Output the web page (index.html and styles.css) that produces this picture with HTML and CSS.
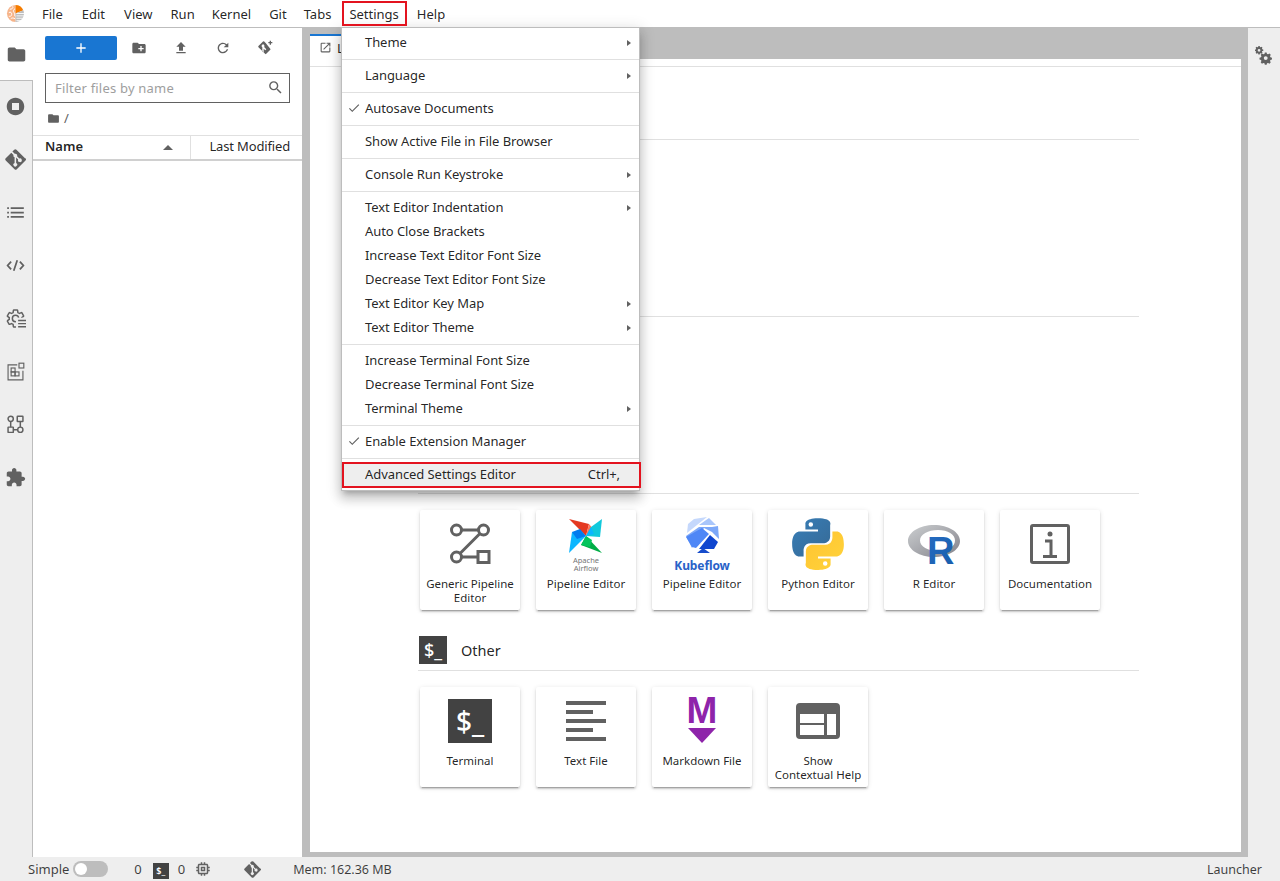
FILE: index.html
```html
<!DOCTYPE html>
<html lang="en">
<head>
<meta charset="utf-8">
<title>JupyterLab</title>
<link rel="stylesheet" href="styles.css">
</head>
<body>
<div class="app">
  <header class="topbar">
    <svg class="logo" viewBox="0 0 20 20">
      <path d="M10 1A9 9 0 0 0 10 19z" fill="#f6b48a"/>
      <path d="M10 1A9 9 0 0 1 18.200 6.500L10 10z" fill="#f57c00"/>
      <path d="M10 10 18.200 6.500A9 9 0 0 1 10 19z" fill="#bdbdbd"/>
      <path d="M7 2.500c1 2-1 3-3 3M3 9c2-1 3 0 3 2s-2 2-3 2M9.500 5c-2 1-2 3-1 4s0 3 1 4M5 15.500c1-1 3-1 4.500 0" fill="none" stroke="#fff" stroke-width="1"/>
      <path d="M11 10h8M11 12.500h8M11 15h7M11 17.500h5" fill="none" stroke="#fff" stroke-width=".9"/>
    </svg>
    <nav class="menubar">
      <span class="menubar-item m-file">File</span>
      <span class="menubar-item m-edit">Edit</span>
      <span class="menubar-item m-view">View</span>
      <span class="menubar-item m-run">Run</span>
      <span class="menubar-item m-kernel">Kernel</span>
      <span class="menubar-item m-git">Git</span>
      <span class="menubar-item m-tabs">Tabs</span>
      <span class="menubar-item m-settings">Settings</span>
      <span class="menubar-item m-help">Help</span>
    </nav>
  </header>

  <div class="middle">
    <aside class="sidebar">
      <div class="side-tab active"><svg viewBox="0 0 24 24"><path d="M10 4H4c-1.1 0-1.99.9-1.99 2L2 18c0 1.1.9 2 2 2h16c1.1 0 2-.9 2-2V8c0-1.1-.9-2-2-2h-8l-2-2z"/></svg></div>
      <div class="side-rest">
        <div class="side-tab"><svg viewBox="0 0 24 24"><path d="M12 2C6.48 2 2 6.48 2 12s4.48 10 10 10 10-4.48 10-10S17.52 2 12 2zm4 14H8V8h8v8z"/></svg></div>
        <div class="side-tab"><svg viewBox="0 0 24 24"><path d="M23.15 10.9 13.1.85a1.8 1.8 0 0 0-2.55 0L8.47 2.93l2.64 2.64a2.14 2.14 0 0 1 2.71 2.73l2.54 2.54a2.14 2.14 0 1 1-1.28 1.21l-2.37-2.37v6.24a2.14 2.14 0 1 1-1.76-.06v-6.3a2.14 2.14 0 0 1-1.16-2.81L7.18 4.22.85 10.55a1.8 1.8 0 0 0 0 2.55l10.05 10.05a1.8 1.8 0 0 0 2.55 0l10-10a1.8 1.8 0 0 0 0-2.55z"/></svg></div>
        <div class="side-tab"><svg viewBox="0 0 24 24"><path d="M2.500 13h2v-2h-2v2zm0 5h2v-2h-2v2zm0-10h2V6h-2v2zm4 5h15v-2h-15v2zm0 5h15v-2h-15v2zm0-12v2h15V6h-15z"/></svg></div>
        <div class="side-tab"><svg viewBox="0 0 24 24"><path class="stroke" d="M7 7.500 3 12l4 4.500M17 7.500 21 12l-4 4.500M14 6l-4 12"/></svg></div>
        <div class="side-tab"><svg viewBox="0 0 24 24">
          <path class="stroke thin" d="M19.140 12.940c.04-.3.06-.61.06-.94 0-.32-.02-.64-.07-.94l2.030-1.580a.49.49 0 0 0 .12-.61l-1.920-3.320a.488.488 0 0 0-.59-.22l-2.390.96c-.5-.38-1.030-.7-1.620-.94l-.36-2.540a.484.484 0 0 0-.48-.41h-3.840c-.24 0-.43.17-.47.41l-.36 2.540c-.59.24-1.130.57-1.620.94l-2.390-.96c-.22-.08-.47 0-.59.22L2.740 8.870c-.12.21-.08.47.12.61l2.030 1.580c-.05.3-.09.63-.09.94s.02.64.07.94l-2.030 1.580a.49.49 0 0 0-.12.61l1.920 3.320c.12.22.37.29.59.22l2.390-.96c.5.38 1.030.7 1.620.94l.36 2.540c.05.24.24.41.48.41h3.840c.24 0 .44-.17.47-.41l.36-2.540c.59-.24 1.130-.56 1.620-.94l2.390.96c.22.08.47 0 .59-.22l1.920-3.320c.12-.22.07-.47-.12-.61l-2.010-1.580zM12 15.600c-1.980 0-3.600-1.620-3.600-3.600s1.620-3.600 3.600-3.600 3.600 1.620 3.600 3.600-1.620 3.600-3.600 3.600z"/>
          <rect class="bgfill" x="12.500" y="11" width="12" height="13"/>
          <path d="M15 13.500h9v1.700h-9zM15 17h9v1.700h-9zM15 20.500h9v1.700h-9z"/>
        </svg></div>
        <div class="side-tab"><svg viewBox="0 0 24 24"><g class="stroke fine"><path d="M14 4.500H3.500v17h17V11"/><rect x="16" y="2.500" width="5.500" height="5.500"/><rect x="7" y="8" width="4.500" height="4.500"/><rect x="7" y="12.500" width="4.500" height="4.500"/><rect x="11.500" y="12.500" width="4.500" height="4.500"/></g></svg></div>
        <div class="side-tab"><svg viewBox="0 0 24 24"><g class="stroke thin"><circle cx="6.500" cy="5.500" r="3"/><rect x="14" y="2.500" width="6.500" height="6" rx=".5"/><rect x="3.500" y="15" width="6" height="6" rx=".5"/><circle cx="17.500" cy="18" r="3"/><path d="M6.500 8.500V15M17.500 8.500V15M9.500 18h5"/></g></svg></div>
        <div class="side-tab"><svg viewBox="0 0 24 24"><path d="M20.500 11H19V7c0-1.100-.9-2-2-2h-4V3.500C13 2.120 11.880 1 10.500 1S8 2.120 8 3.500V5H4c-1.100 0-1.990.9-1.990 2v3.800H3.500c1.490 0 2.700 1.210 2.700 2.700s-1.210 2.700-2.700 2.700H2V20c0 1.100.9 2 2 2h3.800v-1.500c0-1.490 1.210-2.700 2.700-2.700 1.490 0 2.700 1.210 2.700 2.700V22H17c1.100 0 2-.9 2-2v-4h1.500c1.380 0 2.500-1.120 2.500-2.500S21.880 11 20.500 11z"/></svg></div>
      </div>
    </aside>

    <section class="filepanel">
      <div class="fp-toolbar">
        <button class="new-btn" type="button"><svg viewBox="0 0 24 24"><path d="M19 13h-6v6h-2v-6H5v-2h6V5h2v6h6v2z"/></svg></button>
        <div class="fp-tools">
          <svg viewBox="0 0 24 24"><path d="M20 6h-8l-2-2H4c-1.110 0-1.990.89-1.990 2L2 18c0 1.110.89 2 2 2h16c1.110 0 2-.89 2-2V8c0-1.110-.89-2-2-2zm-1 8h-3v3h-2v-3h-3v-2h3V9h2v3h3v2z"/></svg>
          <svg viewBox="0 0 24 24"><path d="M5 20h14v-2H5v2zm0-10h4v6h6v-6h4l-7-7-7 7z"/></svg>
          <svg viewBox="0 0 24 24"><path d="M17.650 6.350A7.960 7.960 0 0 0 12 4c-4.420 0-7.990 3.580-7.990 8s3.570 8 7.990 8c3.730 0 6.840-2.550 7.730-6h-2.080A5.990 5.990 0 0 1 12 18c-3.310 0-6-2.690-6-6s2.690-6 6-6c1.660 0 3.140.69 4.220 1.780L13 11h7V4l-2.350 2.350z"/></svg>
          <svg viewBox="0 0 24 24"><path d="M13 4.500 10.800 2.300a1.300 1.300 0 0 0-1.800 0L2.200 9.100a1.300 1.300 0 0 0 0 1.800l9.900 9.900a1.300 1.300 0 0 0 1.800 0l6-6a1.300 1.300 0 0 0 0-1.800zM9 6l2 2v3l3 3-1.500 1.500L10 13v5H8v-7L6.500 9z"/><path d="M19 1h2v2h2v2h-2v2h-2V5h-2V3h2z"/></svg>
        </div>
      </div>
      <div class="filter">
        <span class="filter-text">Filter files by name</span>
        <svg viewBox="0 0 24 24"><path d="M15.500 14h-.79l-.28-.27A6.470 6.470 0 0 0 16 9.500 6.500 6.500 0 1 0 9.500 16c1.610 0 3.090-.59 4.230-1.570l.27.28v.79l5 4.990L20.490 19l-4.990-5zm-6 0C7.010 14 5 11.990 5 9.500S7.010 5 9.500 5 14 7.010 14 9.500 11.990 14 9.500 14z"/></svg>
      </div>
      <div class="crumbs">
        <svg viewBox="0 0 24 24"><path d="M10 4H4c-1.100 0-1.990.9-1.990 2L2 18c0 1.100.9 2 2 2h16c1.100 0 2-.9 2-2V8c0-1.100-.9-2-2-2h-8l-2-2z"/></svg>
        <span>/</span>
      </div>
      <div class="listing-head">
        <div class="col-name"><span>Name</span><i class="caret-up"></i></div>
        <div class="col-mod">Last Modified</div>
      </div>
    </section>

    <main class="dock">
      <div class="tabbar">
        <div class="tab">
          <svg viewBox="0 0 24 24"><path d="M19 19H5V5h7V3H5a2 2 0 0 0-2 2v14a2 2 0 0 0 2 2h14a2 2 0 0 0 2-2v-7h-2v7zM14 3v2h3.590l-9.830 9.830 1.410 1.410L19 6.410V10h2V3h-7z"/></svg>
          <span>Launcher</span>
        </div>
      </div>
      <div class="launcher">
        <div class="toolbar-strip"></div>
        <div class="sections">
          <section class="lsec"><div class="lhead"></div><div class="cards empty"></div></section>
          <section class="lsec"><div class="lhead"></div><div class="cards empty"></div></section>
          <section class="lsec">
            <div class="lhead"></div>
            <div class="cards">
              <div class="card"><div class="card-icon">
                <svg class="i44" viewBox="0 0 40 40"><g class="pipe"><circle cx="6.500" cy="6" r="5"/><circle cx="33.500" cy="6" r="5"/><circle cx="6.500" cy="33" r="5"/><rect x="28" y="27.500" width="11" height="11"/><path d="M11.500 6h17M30 9.500 10 29.500M11.500 33H28"/></g></svg>
              </div><div class="card-label">Generic Pipeline Editor</div></div>
              <div class="card"><div class="card-icon">
                <svg class="i-air" viewBox="0 0 34 52">
                  <path d="M0 0 20 5 17 17z" fill="#e43921"/>
                  <path d="M20 5 25 11 17 17z" fill="#ff7557"/>
                  <path d="M33 0 31 18 17 17 22 8z" fill="#11c9dc"/>
                  <path d="M22 8 25 15 17 17z" fill="#0cb6ff"/>
                  <path d="M33 34 12 26 17 17z" fill="#00ad46"/>
                  <path d="M17 17 23 21 21 28 12 26z" fill="#04c45c"/>
                  <path d="M0 34 3 13 17 17z" fill="#0cb6ff"/>
                  <path d="M3 13 11 10 17 17 8 20z" fill="#017cee"/>
                  <text class="air-text" x="17" y="44">Apache</text><text class="air-text" x="17" y="51.500">Airflow</text>
                </svg>
              </div><div class="card-label">Pipeline Editor</div></div>
              <div class="card"><div class="card-icon kube">
                <svg class="i-kube" viewBox="0 0 34 36">
                  <path d="M9 2 22 0 12 8 2 16 3 7z" fill="#c5d8fc"/>
                  <path d="M14 8 24 1 31 8z" fill="#a9c6fb"/>
                  <path d="M1 19 14 10 27 10 33 9 34 22 27 15 19 11 7 31z" fill="#7da8f8"/>
                  <path d="M1 20 17 11 24 17 11 31 7 30z" fill="#4f87f6"/>
                  <path d="M25 18 33 25 29 32 14 32z" fill="#0f46cf"/>
                  <path d="M12 36 18 31 25 36z" fill="#174ccb"/>
                </svg>
                <span class="kube-text">Kubeflow</span>
              </div><div class="card-label">Pipeline Editor</div></div>
              <div class="card"><div class="card-icon">
                <svg class="i-py" viewBox="0 0 24 24">
                  <defs>
                    <linearGradient id="pyb" x1="0" y1="0" x2="1" y2="1"><stop offset="0" stop-color="#387eb8"/><stop offset="1" stop-color="#366994"/></linearGradient>
                    <linearGradient id="pyy" x1="0" y1="0" x2="1" y2="1"><stop offset="0" stop-color="#ffd43b"/><stop offset="1" stop-color="#ffc331"/></linearGradient>
                  </defs>
                  <path fill="url(#pyb)" d="M11.900.5c-5.800 0-5.500 2.500-5.500 2.500v2.600h5.600v.8H4.200S.5 6 .5 11.900s3.200 5.700 3.200 5.700h1.900v-2.700s-.1-3.200 3.200-3.200h5.500s3.100 0 3.100-3V3.600S18.900.5 11.900.5zM8.800 2.300a1 1 0 1 1 0 2 1 1 0 0 1 0-2z"/>
                  <path fill="url(#pyy)" transform="rotate(180 12 12)" d="M11.900.5c-5.800 0-5.500 2.500-5.500 2.500v2.600h5.600v.8H4.200S.5 6 .5 11.900s3.200 5.700 3.200 5.700h1.900v-2.700s-.1-3.200 3.200-3.200h5.500s3.100 0 3.100-3V3.600S18.900.5 11.900.5zM8.800 2.300a1 1 0 1 1 0 2 1 1 0 0 1 0-2z"/>
                </svg>
              </div><div class="card-label">Python Editor</div></div>
              <div class="card"><div class="card-icon">
                <svg class="i-r" viewBox="0 0 52 39">
                  <defs>
                    <linearGradient id="rg" x1="0" y1="0" x2="1" y2="1"><stop offset="0" stop-color="#cbced0"/><stop offset="1" stop-color="#84838b"/></linearGradient>
                    <linearGradient id="rb" x1="0" y1="0" x2="1" y2="1"><stop offset="0" stop-color="#276dc3"/><stop offset="1" stop-color="#165caa"/></linearGradient>
                  </defs>
                  <path fill="url(#rg)" fill-rule="evenodd" d="M26 0C11.600 0 0 7.200 0 16s11.600 16 26 16 26-7.200 26-16S40.400 0 26 0zm4 5c10 0 17 4.500 17 10.500S40 26 30 26 12 21.500 12 15.500 20 5 30 5z"/>
                  <text class="r-text" x="19" y="38.500" fill="url(#rb)">R</text>
                </svg>
              </div><div class="card-label">R Editor</div></div>
              <div class="card"><div class="card-icon">
                <svg class="i-doc" viewBox="0 0 40 40"><rect x="1.500" y="1.500" width="37" height="37" rx="1.500" class="docbox"/><circle cx="20" cy="10" r="2.500" fill="#616161"/><path d="M15 17h6v15M13 32.500h14" class="docline"/></svg>
              </div><div class="card-label">Documentation</div></div>
            </div>
          </section>
          <section class="lsec">
            <div class="lhead">
              <div class="term-small"><span>$_</span></div>
              <h2>Other</h2>
            </div>
            <div class="cards">
              <div class="card"><div class="card-icon"><div class="term-big"><span>$_</span></div></div><div class="card-label">Terminal</div></div>
              <div class="card"><div class="card-icon">
                <svg class="i-text" viewBox="0 0 40 40"><path d="M0 0h40v4H0zM0 9h27v4H0zM0 18h40v4H0zM0 27h27v4H0zM0 36h40v4H0z" fill="#616161"/></svg>
              </div><div class="card-label">Text File</div></div>
              <div class="card"><div class="card-icon md">
                <span class="md-m">M</span>
                <svg class="i-mdarrow" viewBox="0 0 28 15"><path d="M0 0h28L14 15z" fill="#8e24aa"/></svg>
              </div><div class="card-label">Markdown File</div></div>
              <div class="card"><div class="card-icon">
                <svg class="i-help" viewBox="0 0 44 36"><path fill="#616161" fill-rule="evenodd" d="M4 0h36a4 4 0 0 1 4 4v28a4 4 0 0 1-4 4H4a4 4 0 0 1-4-4V4a4 4 0 0 1 4-4zM4 11v9h24v-9zM4 22v10h24V22zM31 11v21h9V11z"/></svg>
              </div><div class="card-label">Show<br>Contextual Help</div></div>
            </div>
          </section>
        </div>
      </div>
    </main>

    <aside class="rightbar">
      <svg viewBox="0 0 24 24"><path d="M15.500 8.500l.5 2 1.500.6 1.800-1 1.700 1.700-1 1.800.6 1.500 2 .5v2.400l-2 .5-.6 1.500 1 1.800-1.700 1.700-1.800-1-1.500.6-.5 2h-2.400l-.5-2-1.500-.6-1.800 1-1.700-1.700 1-1.800-.6-1.500-2-.5v-2.400l2-.5.6-1.500-1-1.800 1.700-1.700 1.800 1 1.500-.6.500-2zM14.300 13.500a2.600 2.600 0 1 0 0 5.200 2.600 2.600 0 0 0 0-5.200z" fill-rule="evenodd"/><path d="M6.300 0l.3 1.300 1 .4 1.100-.7 1.300 1.300-.7 1.100.4 1 1.300.3v1.800l-1.300.3-.4 1 .7 1.100-1.300 1.300-1.100-.7-1 .4-.3 1.300H4.500l-.3-1.300-1-.4-1.100.7L.8 9l.7-1.100-.4-1L-.2 6.600V4.800l1.300-.3.4-1-.7-1.100L2.100 1.100l1.100.7 1-.4L4.500 0zM5.400 3.900a1.800 1.800 0 1 0 0 3.600 1.800 1.800 0 0 0 0-3.600z" fill-rule="evenodd"/></svg>
    </aside>
  </div>

  <footer class="statusbar">
    <div class="st-simple">Simple</div>
    <div class="toggle"><i></i></div>
    <span class="st-n1">0</span>
    <div class="term-tiny"><span>$_</span></div>
    <span class="st-n2">0</span>
    <svg class="st-chip" viewBox="0 0 24 24"><path d="M15 9H9v6h6V9zm-2 4h-2v-2h2v2zm8-2V9h-2V7c0-1.100-.9-2-2-2h-2V3h-2v2h-2V3H9v2H7c-1.100 0-2 .9-2 2v2H3v2h2v2H3v2h2v2c0 1.100.9 2 2 2h2v2h2v-2h2v2h2v-2h2c1.100 0 2-.9 2-2v-2h2v-2h-2v-2h2zm-4 6H7V7h10v10z"/></svg>
    <svg class="st-git" viewBox="0 0 24 24"><path d="M23.150 10.900 13.100.85a1.800 1.800 0 0 0-2.550 0L8.470 2.930l2.640 2.640a2.140 2.140 0 0 1 2.710 2.730l2.540 2.540a2.140 2.140 0 1 1-1.280 1.210l-2.370-2.370v6.240a2.140 2.140 0 1 1-1.760-.06v-6.300a2.140 2.140 0 0 1-1.160-2.810L7.180 4.220.85 10.550a1.800 1.800 0 0 0 0 2.550l10.050 10.050a1.800 1.800 0 0 0 2.550 0l10-10a1.800 1.800 0 0 0 0-2.550z"/></svg>
    <span class="st-mem">Mem: 162.36 MB</span>
    <span class="st-right">Launcher</span>
  </footer>

  <div class="menu">
    <div class="mgroup"><div class="mitem"><span>Theme</span><i class="sub"></i></div></div>
    <div class="mgroup"><div class="mitem"><span>Language</span><i class="sub"></i></div></div>
    <div class="mgroup"><div class="mitem"><svg class="check" viewBox="0 0 24 24"><path d="M9 16.170 4.830 12l-1.420 1.410L9 19 21 7l-1.410-1.410z"/></svg><span>Autosave Documents</span></div></div>
    <div class="mgroup"><div class="mitem"><span>Show Active File in File Browser</span></div></div>
    <div class="mgroup"><div class="mitem"><span>Console Run Keystroke</span><i class="sub"></i></div></div>
    <div class="mgroup">
      <div class="mitem"><span>Text Editor Indentation</span><i class="sub"></i></div>
      <div class="mitem"><span>Auto Close Brackets</span></div>
      <div class="mitem"><span>Increase Text Editor Font Size</span></div>
      <div class="mitem"><span>Decrease Text Editor Font Size</span></div>
      <div class="mitem"><span>Text Editor Key Map</span><i class="sub"></i></div>
      <div class="mitem"><span>Text Editor Theme</span><i class="sub"></i></div>
    </div>
    <div class="mgroup">
      <div class="mitem"><span>Increase Terminal Font Size</span></div>
      <div class="mitem"><span>Decrease Terminal Font Size</span></div>
      <div class="mitem"><span>Terminal Theme</span><i class="sub"></i></div>
    </div>
    <div class="mgroup"><div class="mitem"><svg class="check" viewBox="0 0 24 24"><path d="M9 16.170 4.830 12l-1.420 1.410L9 19 21 7l-1.410-1.410z"/></svg><span>Enable Extension Manager</span></div></div>
    <div class="mgroup"><div class="mitem hl"><span>Advanced Settings Editor</span><span class="shortcut">Ctrl+,</span></div></div>
  </div>
  <div class="red red-settings"></div>
  <div class="red red-advanced"></div>
</div>
</body>
</html>
```

FILE: styles.css
```css
* { box-sizing: border-box; }
html, body { margin: 0; height: 100%; overflow: hidden; }
body {
  font-family: "Noto Sans", "Open Sans", sans-serif;
  font-size: 13px;
  color: rgba(0, 0, 0, .87);
  background: #fff;
}
.app { position: relative; display: flex; flex-direction: column; width: 1280px; height: 881px; }

/* top bar */
.topbar { display: flex; align-items: center; height: 28px; border-bottom: 1px solid #bdbdbd; flex: none; }
.logo { width: 19px; height: 19px; margin: 0 0 1px 6px; flex: none; }
.menubar { display: flex; align-items: center; margin-left: 17px; }
.menubar-item { white-space: nowrap; }
.m-edit { margin-left: 19px; }
.m-view { margin-left: 19px; }
.m-run { margin-left: 18px; }
.m-kernel { margin-left: 17px; }
.m-git { margin-left: 18px; }
.m-tabs { margin-left: 17px; }
.m-settings { margin-left: 18px; }
.m-help { margin-left: 18px; }

/* middle */
.middle { display: flex; flex: 1; min-height: 0; }
.sidebar { width: 33px; flex: none; display: flex; flex-direction: column; background: #fff; }
.side-rest { flex: 1; background: #eee; border-right: 1px solid #bdbdbd; border-top: 1px solid #bdbdbd; }
.side-tab { height: 53px; display: flex; align-items: center; justify-content: center; }
.sidebar > .side-tab { height: 52px; }
.side-rest .side-tab { padding: 0 2px 2px 0; }
.side-tab svg { width: 21px; height: 21px; fill: #616161; }
.stroke { fill: none; stroke: #616161; stroke-width: 2; }
.thin { stroke-width: 1.700; fill: none; }
.fine { stroke-width: 1.300; }
.side-tab .bgfill { fill: #eee; }

.filepanel { width: 269px; flex: none; background: #fff; display: flex; flex-direction: column; }
.fp-toolbar { display: flex; align-items: center; height: 24px; margin: 8px 12px 0; }
.new-btn { width: 72px; height: 24px; padding: 0; border: 0; border-radius: 2px; background: #1976d2; display: flex; align-items: center; justify-content: center; }
.new-btn svg { width: 16px; height: 16px; fill: #fff; }
.fp-tools { display: flex; margin-left: 14px; gap: 26px; }
.fp-tools svg { width: 16px; height: 16px; fill: #616161; }
.filter { display: flex; align-items: center; justify-content: space-between; height: 30px; margin: 13px 12px 0; padding: 0 5px 0 9px; border: 1px solid #616161; }
.filter-text { color: #9e9e9e; letter-spacing: .2px; }
.filter svg { width: 17px; height: 17px; margin-top: -2px; fill: #616161; }
.crumbs { display: flex; align-items: center; height: 32px; padding: 0 0 2px 14px; gap: 4px; color: #616161; }
.crumbs svg { width: 13px; height: 13px; fill: #616161; }
.listing-head { display: flex; height: 26px; margin-top: 0; border-top: 1px solid #e0e0e0; border-bottom: 2px solid #d0d0d0; }
.col-name { width: 158px; flex: none; display: flex; align-items: center; justify-content: space-between; padding: 0 17px 3px 12px; border-right: 1px solid #e0e0e0; font-weight: 600; }
.caret-up { width: 0; height: 0; margin-top: 2px; border-left: 5px solid transparent; border-right: 5px solid transparent; border-bottom: 5px solid #616161; }
.col-mod { flex: 1; display: flex; align-items: center; justify-content: flex-end; padding: 0 12px 3px 0; letter-spacing: -.15px; }

.dock { flex: none; width: 946px; background: #bdbdbd; border-left: 8px solid #bdbdbd; border-right: 7px solid #bdbdbd; padding-bottom: 5px; display: flex; flex-direction: column; }
.tabbar { height: 31px; padding-top: 6px; flex: none; }
.tab { display: flex; align-items: center; gap: 5px; width: 140px; height: 25px; background: #fff; border-top: 2px solid #1976d2; padding-left: 9px; overflow: hidden; }
.tab svg { width: 13px; height: 13px; fill: #616161; }
.launcher { flex: 1; background: #fff; min-height: 0; overflow: hidden; }
.toolbar-strip { height: 8px; border-bottom: 1px solid #e0e0e0; }
.sections { padding: 38px 0 0 108px; width: 829px; }
.lsec { height: 177px; }
.lhead { display: flex; align-items: center; height: 35px; padding: 0 0 6px 1px; border-bottom: 1px solid #e0e0e0; }
.lhead h2 { margin: 0 0 0 14px; font-size: 14.500px; font-weight: 400; }
.term-small { width: 28px; height: 28px; background: #424242; color: #fff; display: flex; align-items: center; justify-content: center; font-size: 18px; font-weight: 500; }
.cards { display: flex; gap: 16px; padding: 16px 0 0 2px; }
.card { width: 100px; height: 100px; background: #fff; border-radius: 2px; box-shadow: 0 2px 2px 0 rgba(0,0,0,.14), 0 3px 1px -2px rgba(0,0,0,.2), 0 1px 5px 0 rgba(0,0,0,.12); display: flex; flex-direction: column; align-items: center; }
.card-icon { height: 67px; width: 100%; flex: none; display: flex; flex-direction: column; align-items: center; justify-content: center; }
.card-label { font-size: 11.500px; line-height: 14px; text-align: center; padding: 0 4px; }
.card-icon svg { overflow: visible; }
.i44 { width: 40px; height: 40px; }
.pipe circle, .pipe rect, .pipe path { fill: none; stroke: #616161; stroke-width: 3; }
.i-air { width: 34px; height: 52px; margin-top: 2px; }
.air-text { font-family: "Noto Sans", sans-serif; font-size: 7.500px; fill: #757575; text-anchor: middle; }
.i-kube { width: 34px; height: 36px; margin-top: 2px; }
.kube-text { font-size: 12px; font-weight: 700; color: #2962c8; line-height: 13px; margin-top: 6px; letter-spacing: -.1px; }
.i-py { width: 54px; height: 54px; }
.i-r { width: 52px; height: 39px; margin-top: 1px; }
.r-text { font-family: "Liberation Sans", sans-serif; font-size: 38px; font-weight: 700; }
.i-doc { width: 40px; height: 40px; }
.docbox { fill: none; stroke: #616161; stroke-width: 3; }
.docline { fill: none; stroke: #616161; stroke-width: 3; }
.term-big { width: 44px; height: 44px; background: #424242; color: #fff; display: flex; align-items: center; justify-content: center; font-size: 28px; font-weight: 500; }
.i-text { width: 40px; height: 40px; }
.md { gap: 4px; }
.md-m { font-family: "Liberation Sans", sans-serif; font-size: 37px; line-height: 26px; height: 26px; font-weight: 700; color: #8e24aa; }
.i-mdarrow { width: 28px; height: 15px; }
.i-help { width: 44px; height: 36px; }

.rightbar { flex: 1; background: #eee; display: flex; justify-content: center; padding-top: 17px; }
.rightbar svg { width: 18px; height: 20px; fill: #616161; }

/* status */
.statusbar { height: 24px; flex: none; background: #eee; display: flex; align-items: center; font-size: 13px; color: rgba(0,0,0,.75); }
.st-simple { margin-left: 28px; }
.toggle { width: 35px; height: 16px; margin-left: 4px; border-radius: 8px; background: #bdbdbd; padding: 2px; }
.toggle i { display: block; width: 12px; height: 12px; border-radius: 50%; background: #fff; }
.st-n1 { margin-left: 26px; }
.term-tiny { width: 16px; height: 16px; margin: 3px 0 0 11px; background: #424242; color: #fff; display: flex; align-items: center; justify-content: center; font-size: 9px; font-weight: 600; }
.st-n2 { margin-left: 9px; }
.st-chip { width: 18px; height: 18px; margin-left: 9px; fill: #616161; }
.st-git { width: 17px; height: 17px; margin-left: 32px; fill: #616161; }
.st-mem { margin-left: 32px; font-size: 12.500px; }
.st-right { margin-left: auto; margin-right: 18px; font-size: 12.500px; }

/* menu overlay */
.menu { position: absolute; left: 341px; top: 27px; width: 299px; background: #fff; border: 1px solid #bdbdbd; padding: 3px 0; box-shadow: 0 5px 5px -3px rgba(0,0,0,.2), 0 8px 10px 1px rgba(0,0,0,.14), 0 3px 14px 2px rgba(0,0,0,.12); }
.mgroup + .mgroup { border-top: 1px solid #e0e0e0; margin-top: 4px; padding-top: 4px; }
.mitem { position: relative; display: flex; align-items: center; justify-content: space-between; height: 24px; padding: 0 19px 2px 23px; white-space: nowrap; letter-spacing: -.07px; }
.mitem.hl { background: #eee; }
.sub { position: absolute; right: 8px; top: 9px; width: 0; height: 0; border-top: 3.500px solid transparent; border-bottom: 3.500px solid transparent; border-left: 4px solid #616161; }
.check { position: absolute; left: 5px; top: 4px; width: 14px; height: 14px; fill: #616161; }
.red { position: absolute; border: 2px solid #e3131f; pointer-events: none; }
.red-settings { left: 342px; top: 1px; width: 65px; height: 25px; }
.red-advanced { left: 342px; top: 462px; width: 299px; height: 26px; }
```
